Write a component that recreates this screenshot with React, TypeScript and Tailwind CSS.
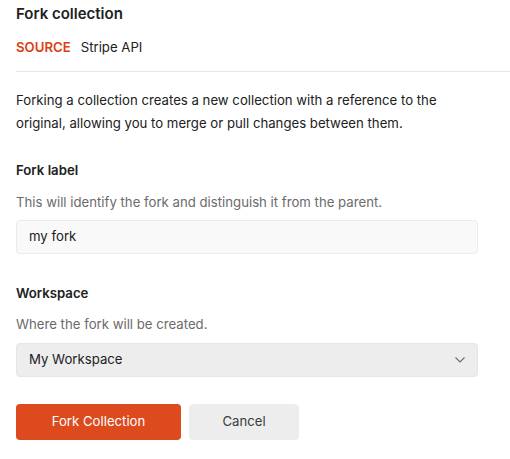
export default function App() {
  return (
    <div
      className="w-[510px] h-[459px] bg-white text-[#212121] text-[13.2px]"
      style={{ fontFamily: "Inter, 'Noto Sans', sans-serif" }}
    >
      <div className="pl-4 pt-[3px]">
        <h1 className="text-[15px] leading-[22px] font-semibold">Fork collection</h1>
        <div className="flex items-center gap-[10px] mt-[12px] leading-[20px]">
          <span className="font-semibold text-[#dc3e14]">SOURCE</span>
          <span>Stripe API</span>
        </div>
      </div>
      <div className="ml-4 mt-[14px] border-t border-[#e6e6e6]" />
      <div className="px-4">
        <p className="mt-[17px] leading-[23px] pr-8">
          Forking a collection creates a new collection with a reference to the original, allowing you to merge or pull
          changes between them.
        </p>

        <div className="mt-[25px] font-semibold leading-[20px]">Fork label</div>
        <div className="mt-[12px] leading-[20px] text-[#6b6b6b]">
          This will identify the fork and distinguish it from the parent.
        </div>
        <div className="mt-[8px] w-[462px] h-[34px] rounded-[4px] border border-[#ebebeb] bg-[#f9f9f9] flex items-center px-3">
          my fork
        </div>

        <div className="mt-[29px] font-semibold leading-[20px]">Workspace</div>
        <div className="mt-[11px] leading-[20px] text-[#6b6b6b]">Where the fork will be created.</div>
        <div className="mt-[9px] w-[462px] h-[34px] rounded-[4px] border border-[#e6e6e6] bg-[#ededed] flex items-center justify-between px-3">
          <span>My Workspace</span>
          <svg width="10" height="6" viewBox="0 0 10 6" fill="none">
            <path d="M0.5 0.5L5 5L9.5 0.5" stroke="#6b6b6b" strokeWidth="1.1" />
          </svg>
        </div>

        <div className="mt-[27px] flex gap-2">
          <button className="w-[165px] h-[36px] rounded-[4px] bg-[#dc4a1e] text-white">Fork Collection</button>
          <button className="w-[110px] h-[36px] rounded-[4px] bg-[#ededed] text-[#3b3b3b]">Cancel</button>
        </div>
      </div>
    </div>
  );
}
